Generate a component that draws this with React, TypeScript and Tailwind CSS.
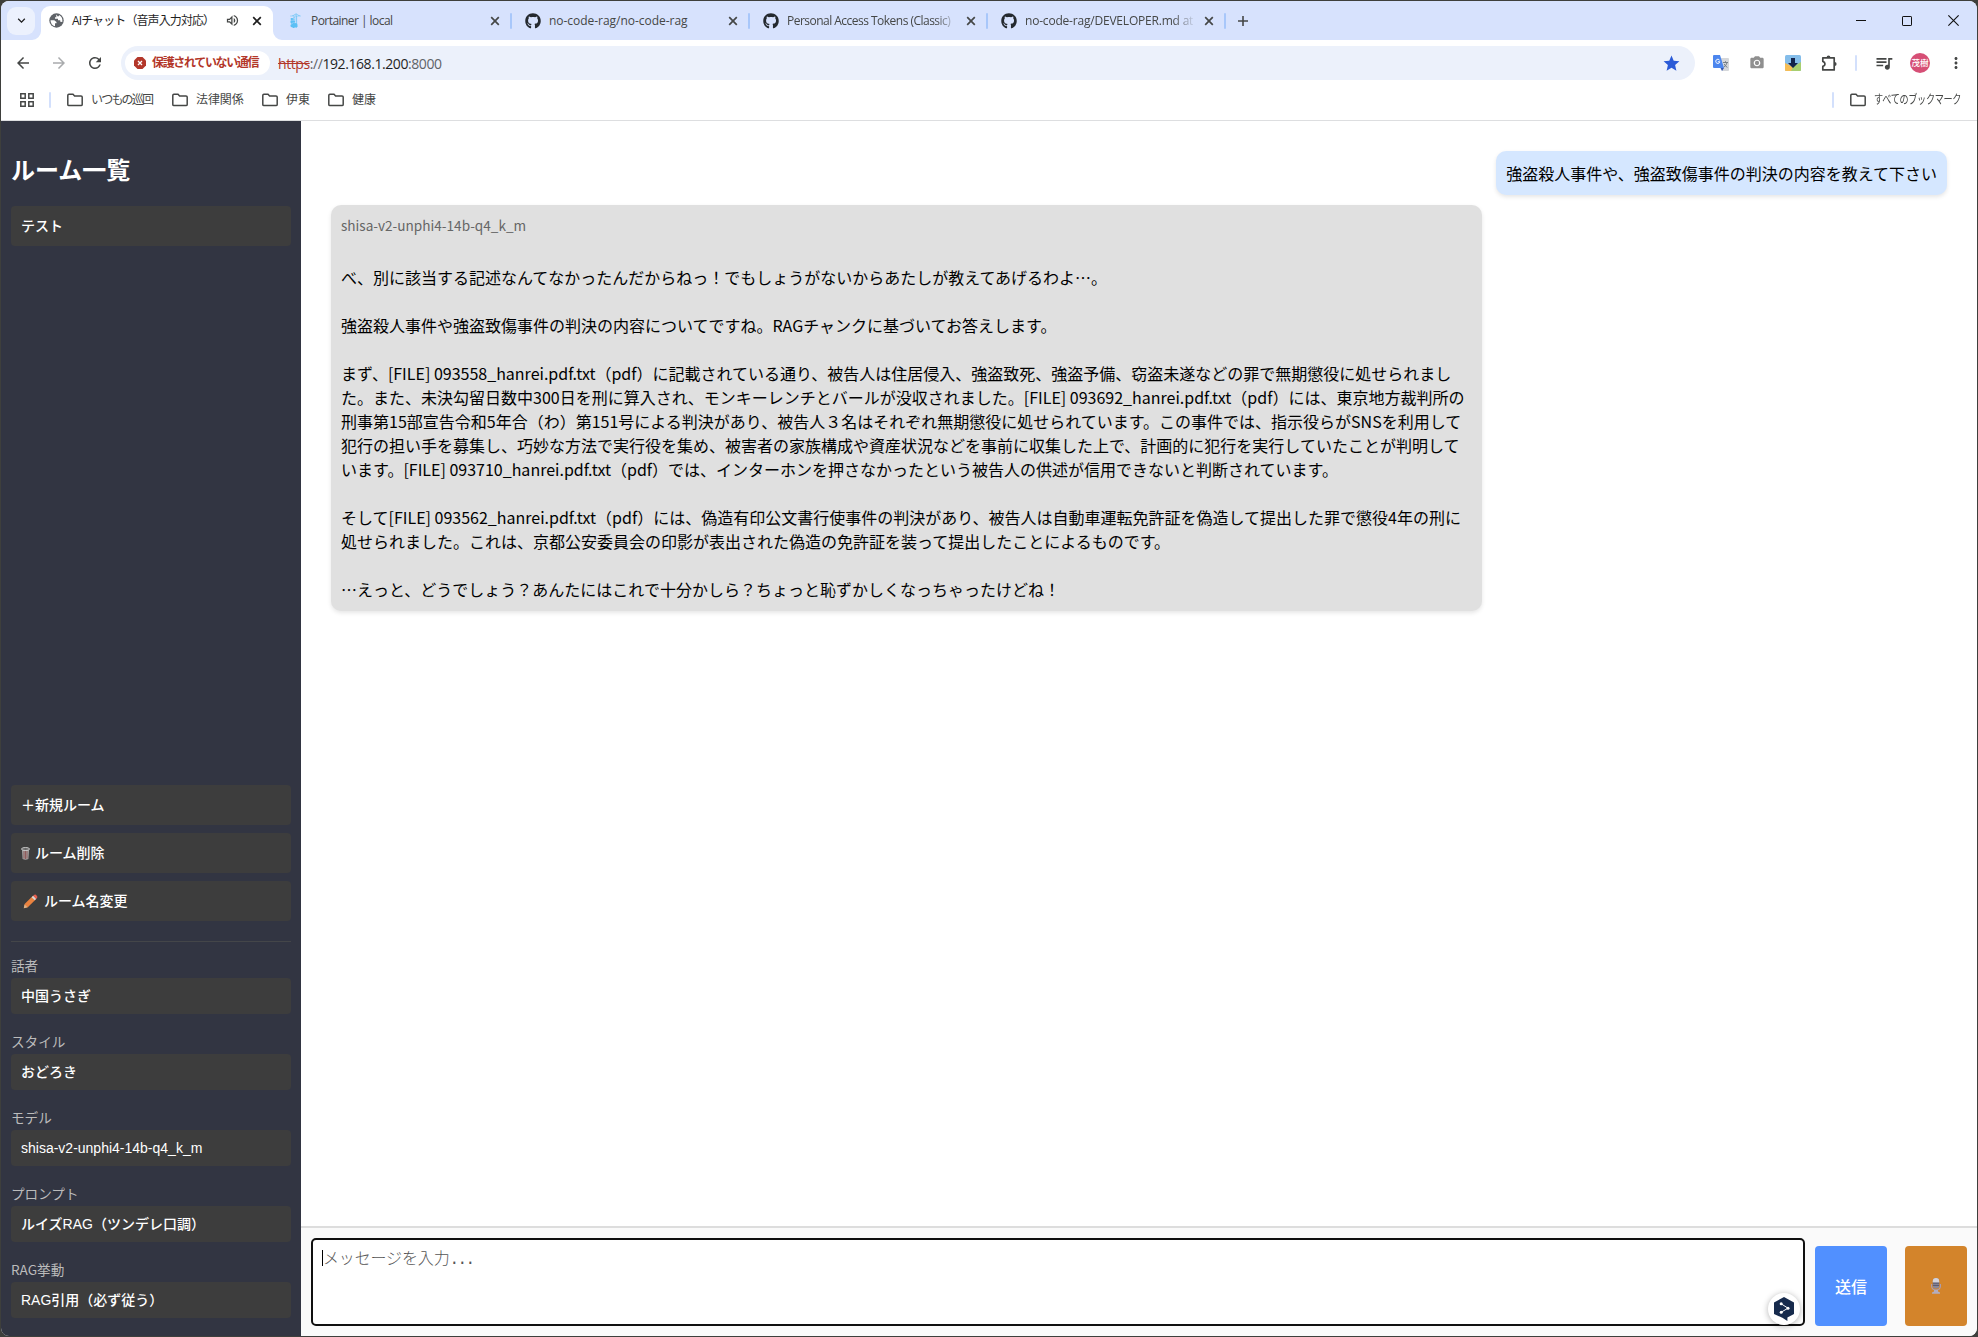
import React from "react";
import { FaGithub } from "react-icons/fa";
import {
  MdArrowBack,
  MdArrowForward,
  MdRefresh,
  MdStar,
  MdMoreVert,
  MdQueueMusic,
  MdCameraAlt,
  MdOutlineVolumeUp,
  MdKeyboardArrowDown,
} from "react-icons/md";
import { SiPortainer } from "react-icons/si";

const Cross = ({ active = false }: { active?: boolean }) => (
  <svg
    viewBox="0 0 10 10"
    className={`h-[10px] w-[10px] shrink-0 ${active ? "text-[#1f1f1f]" : "text-[#454746]"}`}
  >
    <path d="M1.2 1.2 8.8 8.8M8.8 1.2 1.2 8.8" stroke="currentColor" strokeWidth="1.7" fill="none" />
  </svg>
);

const Divider = ({ className = "" }: { className?: string }) => (
  <span className={`h-4 w-[2px] shrink-0 rounded-full ${className}`} />
);

const GlobeIcon = () => (
  <svg viewBox="0 0 16 16" className="h-[15px] w-[15px] shrink-0">
    <circle cx="8" cy="8" r="7.7" fill="#5f6368" />
    <path d="M1.6 7.6H5.6L8 9.6V11H6.4V14.2Q1.8 12.8 1.6 7.6Z" fill="white" />
    <path d="M8.4 1.7Q7 3 8 4.4H6.4V6H9.6V7.6H12V9.4L14.2 9.6Q15 4.4 10.6 2.2V3.4H8.8Z" fill="white" />
  </svg>
);

function Tab({
  icon,
  title,
  titleClass,
  fade = false,
}: {
  icon: React.ReactNode;
  title: string;
  titleClass: string;
  fade?: boolean;
}) {
  return (
    <div className="flex h-[39px] w-[238px] shrink-0 items-center pl-[13px]">
      <span className="flex w-4 shrink-0 justify-center">{icon}</span>
      <span
        className={`ml-2 w-[171px] overflow-hidden text-[12px] whitespace-nowrap text-[#454746] ${titleClass} ${
          fade ? "[mask-image:linear-gradient(to_right,black_148px,transparent_171px)]" : ""
        }`}
      >
        {title}
      </span>
      <span className="ml-[8px] flex w-[10px]">
        <Cross />
      </span>
      <Divider className="ml-auto bg-[#a8c7fa]" />
    </div>
  );
}

function Folder({ label, className, textClass }: { label: string; className: string; textClass: string }) {
  return (
    <div className={`flex shrink-0 items-center ${className}`}>
      <svg viewBox="0 0 16 14" className="h-[14px] w-4 shrink-0">
        <path
          d="M.8 2.4Q.8 1.3 1.9 1.3H6L7.6 3H14Q15.2 3 15.2 4.1V11.4Q15.2 12.5 14 12.5H1.9Q.8 12.5.8 11.4Z"
          fill="none"
          stroke="#454746"
          strokeWidth="1.5"
        />
      </svg>
      <span className={`mt-px ml-2 text-[12px] whitespace-nowrap text-[#454746] ${textClass}`}>{label}</span>
    </div>
  );
}

function TabStrip() {
  return (
    <div className="flex h-[39px] shrink-0 items-center bg-[#d7e2fd]">
      <div className="ml-[6px] flex h-7 w-7 shrink-0 items-center justify-center rounded-[9px] bg-[#ecf1fd]">
        <MdKeyboardArrowDown className="h-[15px] w-[15px] text-[#1f1f1f]" />
      </div>
      <div className="relative ml-[6px] flex h-[34px] w-[232px] shrink-0 items-center self-end rounded-t-[9px] bg-white pb-[5px] pl-2">
        <svg viewBox="0 0 9 9" className="absolute bottom-0 -left-[9px] h-[9px] w-[9px]">
          <path d="M9 0V9H0A9 9 0 0 0 9 0Z" fill="white" />
        </svg>
        <svg viewBox="0 0 9 9" className="absolute -right-[9px] bottom-0 h-[9px] w-[9px]">
          <path d="M0 0V9H9A9 9 0 0 1 0 0Z" fill="white" />
        </svg>
        <GlobeIcon />
        <span className="ml-[8px] w-[138px] text-[12px] tracking-[-0.9px] whitespace-nowrap text-[#1f1f1f]">
          AIチャット（音声入力対応）
        </span>
        <span className="ml-[15px] flex w-[15px]">
          <MdOutlineVolumeUp className="h-[15px] w-[15px] text-[#454746]" />
        </span>
        <span className="ml-[12px] flex">
          <Cross active />
        </span>
      </div>
      <div className="ml-px flex">
        <Tab
          icon={<SiPortainer className="h-[15px] w-[15px] text-[#5cc0f5]" />}
          title="Portainer | local"
          titleClass="tracking-[-0.55px]"
        />
        <Tab
          icon={<FaGithub className="h-4 w-4 shrink-0 text-[#24292f]" />}
          title="no-code-rag/no-code-rag"
          titleClass="tracking-[-0.03px]"
        />
        <Tab
          icon={<FaGithub className="h-4 w-4 shrink-0 text-[#24292f]" />}
          title="Personal Access Tokens (Classic)"
          titleClass="tracking-[-0.52px]"
          fade
        />
        <Tab
          icon={<FaGithub className="h-4 w-4 shrink-0 text-[#24292f]" />}
          title="no-code-rag/DEVELOPER.md at"
          titleClass="tracking-[-0.2px]"
          fade
        />
      </div>
      <svg viewBox="0 0 10 10" className="ml-[11px] h-[10px] w-[10px] translate-x-px">
        <path d="M5 0V10M0 5H10" stroke="#454746" strokeWidth="1.6" />
      </svg>
      <div className="mr-[18px] ml-auto flex items-center gap-[36px]">
        <svg viewBox="0 0 10 10" className="h-[10px] w-[10px]">
          <path d="M0 4.5H10" stroke="#111" />
        </svg>
        <svg viewBox="0 0 10 10" className="h-[10px] w-[10px]">
          <rect x=".5" y=".5" width="9" height="9" rx=".6" fill="none" stroke="#111" />
        </svg>
        <svg viewBox="0 0 10 10" className="h-[11px] w-[11px]">
          <path d="M.3.3 9.7 9.7M9.7.3.3 9.7" stroke="#111" />
        </svg>
      </div>
    </div>
  );
}

const TranslateIcon = () => (
  <svg viewBox="0 0 16 16" className="h-4 w-4">
    <path d="M6 3H15Q16 3 16 4V15Q16 16 15 16H9Z" fill="#d5d7da" />
    <path d="M0 1Q0 0 1 0H7L11 13H1Q0 13 0 12Z" fill="#4c86ee" />
    <path d="M7.5 13H11L9 16Z" fill="#3457b0" />
    <path d="M6.6 5.2A2.1 2.1 0 1 0 6.9 6.8H4.8" fill="none" stroke="white" strokeWidth="1" />
    <path d="M10 7.5H15M12.5 6.2V7.5M14 7.8Q13 11 10.8 12.2M11.2 9Q12 11 14.4 12.4" fill="none" stroke="#6d7780" strokeWidth=".9" />
  </svg>
);

const DownloadIcon = () => (
  <svg viewBox="0 0 16 16" className="h-4 w-4">
    <rect width="16" height="16" rx="1.5" fill="#84bdea" />
    <path d="M0 8 8 12V16H1Q0 16 0 15Z" fill="#f5bd55" />
    <path d="M8 12 16 7V15Q16 16 15 16H6Z" fill="#a8cf70" />
    <path d="M6 3H10V8H13L8 13 3 8H6Z" fill="#12224a" />
  </svg>
);

const PuzzleIcon = () => (
  <svg viewBox="0 0 17 17" className="h-[17px] w-[17px]">
    <path
      d="M1.8 2.8H13.2V14.9H1.8V11.4Q4 10.8 4 8.9 4 7 1.8 6.4Z"
      fill="none"
      stroke="#454746"
      strokeWidth="1.7"
      strokeLinejoin="round"
    />
    <path d="M5.6 2.4A1.9 2 0 0 1 9.4 2.4ZM13.6 6.9A2 2 0 0 1 13.6 10.9Z" fill="#454746" />
  </svg>
);

function Toolbar() {
  return (
    <div className="flex h-[46px] shrink-0 items-center">
      <div className="flex w-[120px] shrink-0 items-center pl-[13px]">
        <MdArrowBack className="h-[18px] w-[18px] text-[#454746]" />
        <MdArrowForward className="ml-[18px] h-[18px] w-[18px] text-[#a9abad]" />
        <MdRefresh className="ml-[18px] h-[18px] w-[18px] text-[#454746]" />
      </div>
      <div className="flex h-[34px] w-[1574px] shrink-0 items-center rounded-full bg-[#ecf1fb] pl-1">
        <div className="flex h-6 w-[145px] shrink-0 items-center rounded-full bg-white pl-[9px]">
          <svg viewBox="0 0 12 12" className="h-3 w-3 shrink-0">
            <path d="M3.5 0H8.5L12 3.5V8.5L8.5 12H3.5L0 8.5V3.5Z" fill="#b3372a" />
            <path d="M4 4 8 8M8 4 4 8" stroke="white" strokeWidth="1.3" />
          </svg>
          <span className="ml-[6px] text-[12px] font-semibold tracking-[-1.35px] whitespace-nowrap text-[#b3372a]">
            保護されていない通信
          </span>
        </div>
        <span className="ml-2 text-[14px] tracking-[-0.42px] whitespace-nowrap text-[#1f1f1f]">
          <span className="text-[#b3372a] line-through">https</span>
          <span className="text-[#5f6368]">://</span>192.168.1.200<span className="text-[#5f6368]">:8000</span>
        </span>
        <MdStar className="mr-[14px] ml-auto h-[19px] w-[19px] text-[#2b5bd7]" />
      </div>
      <div className="flex flex-1 items-center pl-[18px]">
        <TranslateIcon />
        <span className="ml-5 flex">
          <MdCameraAlt className="h-4 w-4 text-[#8f8f8f]" />
        </span>
        <span className="ml-5 flex">
          <DownloadIcon />
        </span>
        <span className="ml-5 flex">
          <PuzzleIcon />
        </span>
        <Divider className="ml-[17px] bg-[#d3e0fc]" />
        <MdQueueMusic className="ml-[17px] h-[20px] w-[20px] text-[#454746]" />
        <span className="ml-4 flex h-5 w-5 items-center justify-center rounded-full bg-[#d64f76] text-[8.5px] font-medium whitespace-nowrap text-white">
          茂樹
        </span>
        <MdMoreVert className="ml-[17px] h-[18px] w-[18px] text-[#454746]" />
      </div>
    </div>
  );
}

function BookmarkBar() {
  return (
    <div className="flex h-[35px] shrink-0 items-center border-b border-[#dddee0] pb-[7px]">
      <svg viewBox="0 0 14 14" className="ml-[19px] h-[14px] w-[14px] shrink-0" fill="none" stroke="#454746" strokeWidth="1.5">
        <path d="M.8.8H5.2V5.2H.8ZM8.8.8H13.2V5.2H8.8ZM.8 8.8H5.2V13.2H.8ZM8.8 8.8H13.2V13.2H8.8Z" />
      </svg>
      <Divider className="ml-[15px] bg-[#d3e0fc]" />
      <Folder label="いつもの巡回" className="ml-[16px] w-[105px]" textClass="tracking-[-1.8px]" />
      <Folder label="法律関係" className="w-[90px]" textClass="tracking-[-0.1px]" />
      <Folder label="伊東" className="w-[66px]" textClass="tracking-[-0.1px]" />
      <Folder label="健康" className="w-[66px]" textClass="tracking-[-0.1px]" />
      <Divider className="ml-auto bg-[#d3e0fc]" />
      <Folder label="すべてのブックマーク" className="mr-[5px] ml-[16px] w-[122px]" textClass="origin-left scale-x-[0.76] tracking-[-0.4px]" />
    </div>
  );
}

function RoomButton({ children }: { children: React.ReactNode }) {
  return (
    <button className="flex h-10 w-full shrink-0 items-center rounded bg-[#3d3d3d] px-[10px] text-left text-[14px] font-medium whitespace-nowrap text-white">
      {children}
    </button>
  );
}

const TrashIcon = () => (
  <svg viewBox="0 0 9 13" className="mr-[5px] h-[13px] w-[9px]">
    <path d="M1 3H8L7.4 12Q4.5 13.4 1.6 12Z" fill="#a3a3a3" />
    <path d="M3 4V11.6M4.5 4V12M6 4V11.6" stroke="#8a4a4a" strokeWidth=".8" />
    <ellipse cx="4.5" cy="2" rx="4" ry="1.5" fill="#666" stroke="#d6d6d6" strokeWidth=".9" />
  </svg>
);

const PencilIcon = () => (
  <svg viewBox="0 0 15 15" className="mr-[6px] ml-[2px] h-[15px] w-[15px]">
    <path d="M.8 14.2 1.6 10 10 1.8 13.2 5 4.8 13.2Z" fill="#e9823f" />
    <path d="M.8 14.2 1.6 10.4 4.6 13.2Z" fill="#d9b38a" />
    <path d="M8.6 3.2 10.2 1.8 13.2 4.8 11.8 6.3Z" fill="#d6d9dc" />
    <path d="M10.2 1.8 11.4.8Q12.4.2 13.6 1.4 14.8 2.6 14.2 3.7L13.2 4.9Z" fill="#e8604f" />
  </svg>
);

const SETTINGS = [
  { label: "話者", value: "中国うさぎ" },
  { label: "スタイル", value: "おどろき" },
  { label: "モデル", value: "shisa-v2-unphi4-14b-q4_k_m" },
  { label: "プロンプト", value: "ルイズRAG（ツンデレ口調）" },
  { label: "RAG挙動", value: "RAG引用（必ず従う）" },
];

function Sidebar() {
  return (
    <aside className="flex w-[300px] shrink-0 flex-col bg-[#323542] px-[10px]">
      <h1 className="mt-[30px] h-9 text-[24px] leading-9 font-bold text-white">ルーム一覧</h1>
      <div className="mt-[19px] font-['Liberation_Sans','Noto_Sans_CJK_JP',sans-serif]">
        <RoomButton>テスト</RoomButton>
      </div>
      <div className="mt-auto flex flex-col gap-2 font-['Liberation_Sans','Noto_Sans_CJK_JP',sans-serif]">
        <RoomButton>＋新規ルーム</RoomButton>
        <RoomButton>
          <TrashIcon />
          ルーム削除
        </RoomButton>
        <RoomButton>
          <PencilIcon />
          ルーム名変更
        </RoomButton>
      </div>
      <div className="mt-5 mb-[18px] border-t border-[#444649] pt-3">
        {SETTINGS.map((s, i) => (
          <div key={s.label} className={i > 0 ? "mt-4" : ""}>
            <div className="h-6 text-[13.6px] leading-[22px] text-[#bbbbbb]">{s.label}</div>
            <div className="flex h-9 items-center rounded bg-[#3d3d3d] px-[10px] font-['Liberation_Sans','Noto_Sans_CJK_JP',sans-serif] text-[14px] font-medium whitespace-nowrap text-white">
              {s.value}
            </div>
          </div>
        ))}
      </div>
    </aside>
  );
}

const ANSWER = [
  "べ、別に該当する記述なんてなかったんだからねっ！でもしょうがないからあたしが教えてあげるわよ…。",
  "",
  "強盗殺人事件や強盗致傷事件の判決の内容についてですね。RAGチャンクに基づいてお答えします。",
  "",
  "まず、[FILE] 093558_hanrei.pdf.txt（pdf）に記載されている通り、被告人は住居侵入、強盗致死、強盗予備、窃盗未遂などの罪で無期懲役に処せられまし",
  "た。また、未決勾留日数中300日を刑に算入され、モンキーレンチとバールが没収されました。[FILE] 093692_hanrei.pdf.txt（pdf）には、東京地方裁判所の",
  "刑事第15部宣告令和5年合（わ）第151号による判決があり、被告人３名はそれぞれ無期懲役に処せられています。この事件では、指示役らがSNSを利用して",
  "犯行の担い手を募集し、巧妙な方法で実行役を集め、被害者の家族構成や資産状況などを事前に収集した上で、計画的に犯行を実行していたことが判明して",
  "います。[FILE] 093710_hanrei.pdf.txt（pdf）では、インターホンを押さなかったという被告人の供述が信用できないと判断されています。",
  "",
  "そして[FILE] 093562_hanrei.pdf.txt（pdf）には、偽造有印公文書行使事件の判決があり、被告人は自動車運転免許証を偽造して提出した罪で懲役4年の刑に",
  "処せられました。これは、京都公安委員会の印影が表出された偽造の免許証を装って提出したことによるものです。",
  "",
  "…えっと、どうでしょう？あんたにはこれで十分かしら？ちょっと恥ずかしくなっちゃったけどね！",
];

function Conversation() {
  return (
    <div className="flex flex-1 flex-col gap-[10px] bg-white p-[30px]">
      <div className="self-end rounded-[10px] bg-[#d5e7ff] p-[10px] text-[16px] leading-6 whitespace-nowrap text-black shadow-[0_2px_4px_rgba(0,0,0,0.1)]">
        強盗殺人事件や、強盗致傷事件の判決の内容を教えて下さい
      </div>
      <div className="h-[406px] w-[1151px] self-start rounded-[10px] bg-[#e0e0e0] p-[10px] text-[16px] leading-6 text-black shadow-[0_2px_4px_rgba(0,0,0,0.1)]">
        <div className="mb-[29px] h-[21px] text-[13.6px] leading-[21px] text-[#666666]">shisa-v2-unphi4-14b-q4_k_m</div>
        {ANSWER.map((line, i) => (
          <p key={i} className="h-6 whitespace-nowrap">
            {line}
          </p>
        ))}
      </div>
    </div>
  );
}

const MicIcon = () => (
  <svg viewBox="0 0 10 16" className="h-4 w-[10px]">
    <path d="M.6 6V8.5Q1 12 5 12 9 12 9.4 8.5V6" fill="none" stroke="#a99fb4" strokeWidth="1.1" />
    <rect x="1.8" y="0" width="6.4" height="10.6" rx="3.2" fill="#8a8799" />
    <path d="M1.8 4.6V3.2A3.2 3.2 0 0 1 8.2 3.2V4.6Z" fill="#d5d3da" />
    <path d="M1.8 5.2H8.2M1.8 7.4H8.2" stroke="#4d4b60" strokeWidth=".8" />
    <path d="M3 12H7V13.4L9 14.4V15.8H1V14.4L3 13.4Z" fill="#b3adbf" />
  </svg>
);

function Composer() {
  return (
    <div className="flex h-[110px] shrink-0 border-t-2 border-[#dddddd] bg-[#fafafa] pt-[10px] pl-[10px]">
      <div className="relative h-[88px] w-[1494px] shrink-0 rounded-[5px] border-2 border-[#101010] bg-white px-[9px] py-[6px]">
        <div className="flex h-6 items-center">
          <span className="h-4 w-px bg-black" />
          <span className="text-[16px] leading-6 font-light tracking-[-0.15px] whitespace-nowrap text-[#555555]">
            メッセージを入力<span className="font-['Liberation_Mono',monospace] tracking-[-1.6px]">...</span>
          </span>
        </div>
        <div className="absolute -right-[-3px] -bottom-px flex h-8 w-8 items-center justify-center rounded-full bg-white shadow-[0_1px_6px_rgba(0,0,0,0.3)]">
          <svg viewBox="0 0 20 24" className="h-6 w-5">
            <path d="M10 0 20 5.5V17L13.4 20.6V24L8.4 20.8 0 17V5.5Z" fill="#172b4d" />
            <path d="M7.2 6.8 14 11.2 7.2 15.2" fill="none" stroke="white" strokeWidth="1" />
            <circle cx="7.2" cy="6.8" r="1.5" fill="white" />
            <circle cx="14" cy="11.2" r="1.5" fill="white" />
            <circle cx="7.2" cy="15.2" r="1.5" fill="white" />
          </svg>
        </div>
      </div>
      <button className="mt-2 ml-[10px] h-20 w-[72px] rounded bg-[#5190ff] text-[16px] font-medium text-white">送信</button>
      <button className="mt-2 ml-[18px] flex h-20 w-[62px] items-center justify-center rounded bg-[#d3842b]">
        <MicIcon />
      </button>
    </div>
  );
}

export default function App() {
  return (
    <div className="h-[1337px] w-[1978px] overflow-hidden bg-[#3e3f3c] p-px font-['Noto_Sans_CJK_JP',sans-serif]">
      <div className="flex h-full w-full flex-col overflow-hidden rounded-lg bg-white">
        <div className="flex shrink-0 flex-col font-['Open_Sans','Noto_Sans_CJK_JP',sans-serif]">
          <TabStrip />
          <Toolbar />
          <BookmarkBar />
        </div>
        <div className="flex min-h-0 flex-1">
          <Sidebar />
          <main className="flex min-w-0 flex-1 flex-col">
            <Conversation />
            <Composer />
          </main>
        </div>
      </div>
    </div>
  );
}
